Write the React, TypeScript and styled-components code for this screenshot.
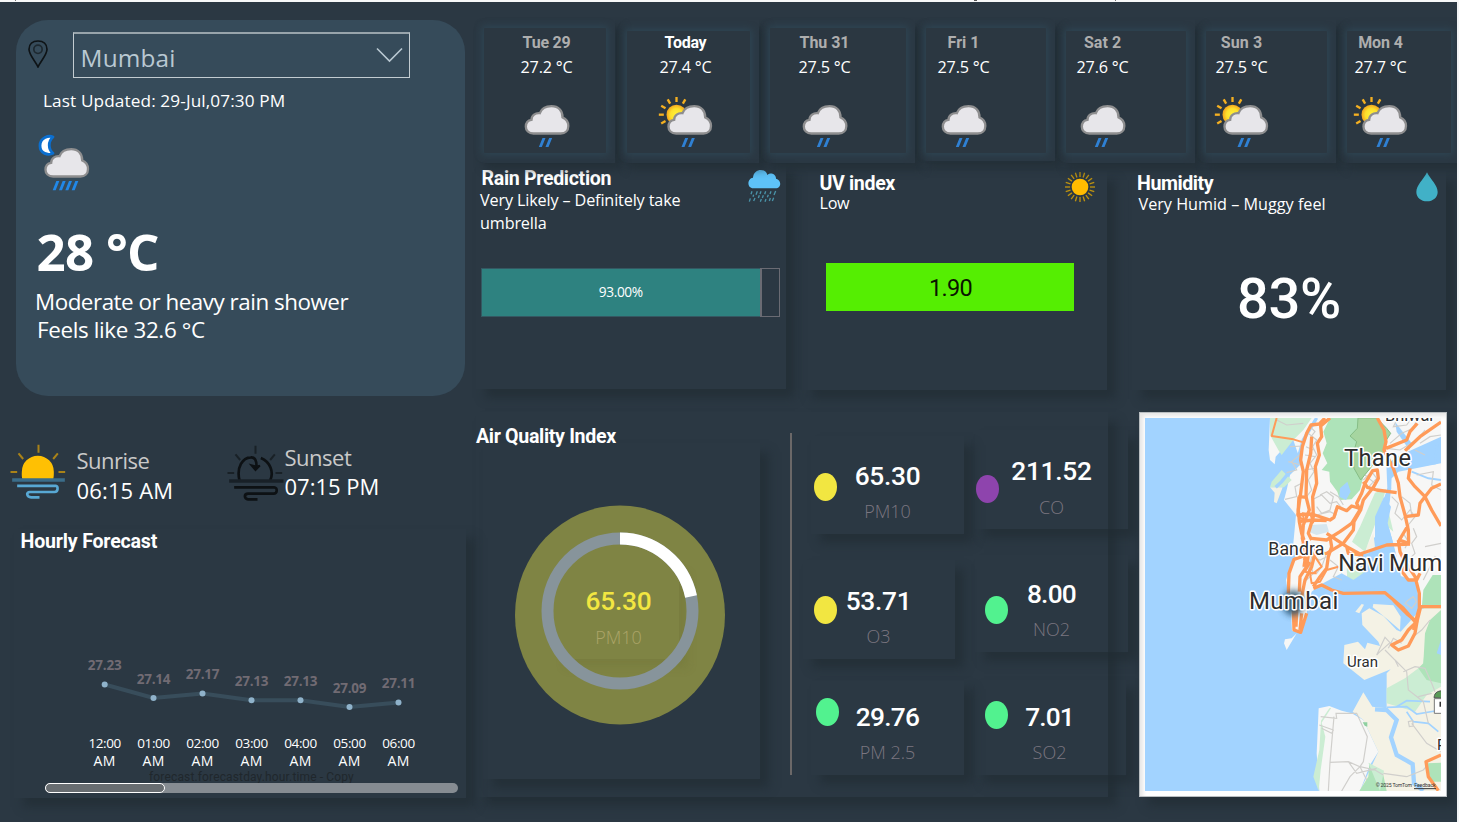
import React from 'react';
import styled, { createGlobalStyle } from 'styled-components';

const GlobalStyle = createGlobalStyle`
  * { box-sizing: border-box; }
  body { margin: 0; background: #f2f4f6; }
`;

const SANS = '"Open Sans", "Noto Sans", sans-serif';
const DIN = 'Roboto, "Liberation Sans", sans-serif';
const SHADOW = '9px 9px 9px rgba(32, 43, 50, 0.62)';

const Page = styled.div`
  width: 1459px;
  height: 822px;
  overflow: hidden;
  display: flex;
  flex-direction: column;
  background: #f2f4f6;
  font-family: ${SANS};
  color: #fff;
`;

const TopStrip = styled.div`
  height: 2px;
  flex: none;
  background:
    linear-gradient(#777, #777) 15px 0 / 1px 1px no-repeat,
    linear-gradient(#555, #555) 974px 0 / 3px 1px no-repeat,
    linear-gradient(#777, #777) 1115px 0 / 1px 1px no-repeat,
    #f7f8f9;
`;

const Board = styled.main`
  display: flex;
  width: 1457px;
  height: 820px;
  overflow: hidden;
  background: #2b3843;
`;

const LeftColumn = styled.section`
  width: 476px;
  flex: none;
`;

const RightColumn = styled.section`
  width: 981px;
  flex: none;
`;

interface LabelProps {
  $size: number;
  $line: number;
  $weight?: number;
  $track?: number;
  $color?: string;
  $din?: boolean;
  $top?: number;
  $left?: number;
}

const Label = styled.div<LabelProps>`
  font-family: ${(p) => (p.$din ? DIN : SANS)};
  font-size: ${(p) => p.$size}px;
  line-height: ${(p) => p.$line}px;
  font-weight: ${(p) => p.$weight ?? 400};
  letter-spacing: ${(p) => p.$track ?? 0}px;
  color: ${(p) => p.$color ?? '#fff'};
  margin-top: ${(p) => p.$top ?? 0}px;
  margin-left: ${(p) => p.$left ?? 0}px;
  white-space: nowrap;
`;

const PanelTitle = styled(Label).attrs({ $size: 19.6, $weight: 700, $din: true })``;

/* ---------- current weather ---------- */

const CityCard = styled.div`
  width: 449px;
  height: 376px;
  margin: 17.5px 0 0 16px;
  padding-top: 12px;
  border-radius: 32px;
  background: #364b5a;
`;

const CityRow = styled.div`
  display: flex;
  padding-left: 12px;
  height: 47px;
`;

const PinIcon = styled.svg`
  width: 20px;
  height: 28px;
  margin: 8.5px 25px 0 0;
`;

const CitySelect = styled.div`
  width: 336.5px;
  height: 46px;
  border: 1px solid #c3ccd1;
  border-top: 2px solid #98a4ab;
  display: flex;
  justify-content: space-between;
  padding: 5px 6px 0 6px;
`;

const Chevron = styled.svg`
  width: 27px;
  height: 16px;
  margin-top: 8px;
`;

const CurrentIcon = styled.svg`
  display: block;
  width: 60px;
  height: 60px;
  margin: 22px 0 0 17px;
`;

/* ---------- sun times ---------- */

const SunTimes = styled.div`
  display: flex;
  height: 133.5px;
  padding: 47.5px 0 0 9.5px;
`;

const SunIcon = styled.svg<{ $shift: number }>`
  width: 58px;
  height: 60px;
  margin-right: ${(p) => p.$shift}px;
  flex: none;
`;

const SunText = styled.div<{ $width: number; $raise: number }>`
  width: ${(p) => p.$width}px;
  margin-top: ${(p) => p.$raise}px;
`;

/* ---------- hourly ---------- */

const HourlyPanel = styled.div`
  width: 452px;
  height: 269px;
  margin-left: 14px;
  padding-top: 3px;
  box-shadow: ${SHADOW};
`;

const HourlyChart = styled.svg`
  display: block;
  width: 452px;
  height: 231px;
`;

const ScrollTrack = styled.div`
  width: 412.5px;
  height: 9.5px;
  margin: 0 0 0 31px;
  border-radius: 5px;
  background: #868c92;
  position: relative;
`;

const ScrollThumb = styled.div`
  width: 120px;
  height: 9.5px;
  border: 1px solid #fff;
  border-left-width: 1.5px;
  border-radius: 5px;
  background: #686d71;
`;

/* ---------- daily ---------- */

const DailyStrip = styled.div`
  display: flex;
  height: 161px;
  padding-top: 18px;
  position: relative;
`;

const DayTile = styled.article<{ $width: number; $height: number; $gap: number }>`
  width: ${(p) => p.$width}px;
  height: ${(p) => p.$height}px;
  margin-right: ${(p) => p.$gap}px;
  padding: 8px 9px 9px 8px;
  flex: none;
  border-radius: 8px 0 0 8px;
  box-shadow: 7px 7px 8px rgba(32, 43, 50, 0.6);
`;

const DayInner = styled.div<{ $drop: number }>`
  height: ${(p) => 125 - p.$drop}px;
  margin-top: ${(p) => p.$drop}px;
  background: #2b3741;
  border-radius: 1px;
  box-shadow: 0 0 7px 2px #2e4553;
`;

const DayContent = styled.div<{ $shift: number; $drop: number }>`
  width: 100px;
  margin-left: ${(p) => p.$shift}px;
  padding-top: ${(p) => 6 - p.$drop}px;
  display: flex;
  flex-direction: column;
  align-items: center;
`;

const DayIcon = styled.svg`
  width: 64px;
  height: 64px;
  margin-top: 13px;
  flex: none;
`;

/* ---------- metrics ---------- */

const MetricRow = styled.div`
  display: flex;
  align-items: flex-start;
  height: 249px;
`;

const MetricCard = styled.article<{ $width: number; $height: number; $top: number; $gap: number }>`
  width: ${(p) => p.$width}px;
  height: ${(p) => p.$height}px;
  margin: ${(p) => p.$top}px ${(p) => p.$gap}px 0 0;
  flex: none;
  box-shadow: ${SHADOW};
`;

const MetricHead = styled.header<{ $height: number; $right: number }>`
  display: flex;
  justify-content: space-between;
  align-items: flex-start;
  height: ${(p) => p.$height}px;
  padding-right: ${(p) => p.$right}px;
`;

const MetricIcon = styled.svg<{ $w: number; $h: number; $top: number }>`
  width: ${(p) => p.$w}px;
  height: ${(p) => p.$h}px;
  margin-top: ${(p) => p.$top}px;
`;

const RainBar = styled.div`
  display: flex;
  width: 299px;
  height: 49px;
  margin-left: 5px;
  border: 1px solid #345862;
  border-right: 0;
`;

const RainFill = styled.div`
  width: 277.5px;
  background: #2e8280;
  display: flex;
  align-items: center;
  justify-content: center;
`;

const RainRest = styled.div`
  flex: 1;
  margin: -1px 0;
  border: 1px solid #6a6b73;
  border-left-width: 2px;
`;

const UvBar = styled.div`
  width: 248px;
  height: 48px;
  margin-left: 24px;
  background: #55ee02;
  display: flex;
  align-items: center;
  justify-content: center;
`;

const HumidityValue = styled.div`
  display: flex;
  justify-content: center;
`;

/* ---------- air quality ---------- */

const BottomRow = styled.div`
  display: flex;
  align-items: flex-start;
`;

const AirPanel = styled.article`
  display: flex;
  width: 632px;
  height: 385px;
  margin-right: 30.5px;
  flex: none;
  box-shadow: ${SHADOW};
`;

const GaugeColumn = styled.div`
  width: 314px;
  flex: none;
`;

const GaugeTile = styled.div`
  width: 277px;
  height: 336px;
  margin-left: 7px;
  margin-top: -2px;
  box-shadow: ${SHADOW};
`;

const Divider = styled.div`
  width: 2px;
  height: 342px;
  margin-top: 21px;
  flex: none;
  background: #6b6868;
`;

const PollutantColumn = styled.div<{ $width: number }>`
  width: ${(p) => p.$width}px;
  flex: none;
`;

const PollutantTile = styled.div<{ $left: number; $top: number; $width: number; $height: number }>`
  display: flex;
  align-items: flex-start;
  width: ${(p) => p.$width}px;
  height: ${(p) => p.$height}px;
  margin: ${(p) => p.$top}px 0 0 ${(p) => p.$left}px;
  box-shadow: ${SHADOW};
`;

const Dot = styled.span<{ $color: string; $left: number; $top: number }>`
  width: 23px;
  height: 28px;
  margin: ${(p) => p.$top}px 0 0 ${(p) => p.$left}px;
  border-radius: 50%;
  flex: none;
  background: ${(p) => p.$color};
`;

const Reading = styled.div<{ $left: number; $top: number }>`
  width: 84px;
  margin: ${(p) => p.$top}px 0 0 ${(p) => p.$left}px;
  flex: none;
  text-align: center;
`;

/* ---------- map ---------- */

const MapFrame = styled.div`
  width: 308px;
  height: 385px;
  padding: 5px 5.5px 6px;
  border: 1px solid #b9bec1;
  background: #fff;
  box-shadow: ${SHADOW}, inset 3px 3px 4px rgba(0, 0, 0, 0.1);
`;

const MapView = styled.svg`
  display: block;
  width: 296px;
  height: 373px;
`;

/* ---------- icons ---------- */

const CLOUD =
  'M190 400.500C174 401 166 391 166 380C166 369 173 361 183 359.500C183 346 195 338 208 339.500C213 326 226 318.500 243 318.500C264 318.500 276.500 332 276 352C288 357 293.500 366 293.500 378C293.500 392 284 400.500 271 400.500Z';

const SunGradient = () => (
  <radialGradient id="sunDisc">
    <stop offset="0" stopColor="#fff23a" />
    <stop offset="0.6" stopColor="#fde02c" />
    <stop offset="1" stopColor="#f3a51d" />
  </radialGradient>
);

const WeatherGlyph = ({ sunny }: { sunny: boolean }) => (
  <DayIcon viewBox="133.5 270 192 192">
    <defs>
      <SunGradient />
    </defs>
    {sunny && (
      <g>
        <circle cx="201" cy="344" r="30" fill="url(#sunDisc)" />
        {[-120, -90, -60, -30, 0, 30].map((a) => (
          <path key={a} d="M201 291v15" stroke="#f5b021" strokeWidth="7" transform={`rotate(${a} 201 344)`} />
        ))}
      </g>
    )}
    <g transform={sunny ? 'translate(11 0)' : undefined}>
      <path d={CLOUD} fill="#e7e6ea" stroke="#8e8e8f" strokeWidth="7" />
      <path d="M216 414h9l-11 27h-9zM236 414h9l-11 27h-9z" fill="#2f80d3" />
    </g>
  </DayIcon>
);

const NightShower = () => (
  <CurrentIcon viewBox="99 399 180 180">
    <path
      d="M159 411C147 405 120 412 120 437C120 461 144 467 159 460C144 448 144 424 159 411Z"
      fill="#fff"
      stroke="#0b6fd0"
      strokeWidth="8.500"
      strokeLinejoin="round"
    />
    <path d={CLOUD} transform="translate(-29.500 129)" fill="#e7e6ea" stroke="#8e8e8f" strokeWidth="7" />
    <path d="M169 543h9l-11 28h-9zM188 543h9l-11 28h-9zM207 543h9l-11 28h-9zM226 543h9l-11 28h-9z" fill="#2188e8" />
  </CurrentIcon>
);

const SunRays = ({ color }: { color: string }) => (
  <g stroke={color} strokeWidth="6" fill="none" opacity="0.85">
    <path d="M114 134v24M54 160l14 17M172 160l-14 17M30 216h20M174 216h20" />
  </g>
);

const SunriseIcon = () => (
  <SunIcon $shift={9} viewBox="28.5 129 174 180">
    <SunRays color="#c08f10" />
    <path d="M66 238C63 228 64 217 64 215A48 48 0 0 1 160 215C160 224 160 230 158 238Z" fill="#ffc003" />
    <path d="M35 240H193" stroke="#3b6d8a" strokeWidth="11" />
    <path
      d="M50 257.500H166C173 257 174 276 162 276H88C76 276 78 291 92 292H117"
      fill="none"
      stroke="#58a8d4"
      strokeWidth="8"
    />
  </SunIcon>
);

const SunsetIcon = () => (
  <SunIcon $shift={-0.5} viewBox="28.5 129 174 180">
    <g transform="translate(0 3)">
      <SunRays color="#161d22" />
      <path d="M66 238C56 198 76 170 100 169C112 168 118 178 117 200M130 171C158 182 170 214 158 238" fill="none" stroke="#0d1114" strokeWidth="8" />
      <path d="M102 193L114 207L127 194L117 197Z" fill="#0d1114" stroke="#0d1114" strokeWidth="6" />
      <path d="M35 240H198" stroke="#182027" strokeWidth="11" />
      <path
        d="M50 259H170C180 259 181 278 168 278H92C78 279 80 293 92 295H120"
        fill="none"
        stroke="#0d1114"
        strokeWidth="8"
      />
    </g>
  </SunIcon>
);

/* ---------- data ---------- */

interface Day {
  name: string;
  temp: string;
  sunny: boolean;
  width: number;
  height: number;
  gap: number;
  shift: number;
  drop: number;
  track: number;
}

const days: Day[] = [
  { name: 'Tue 29', temp: '27.2 °C', sunny: false, width: 139, height: 143, gap: 4, shift: 12.5, drop: 0, track: -0.25 },
  { name: 'Today', temp: '27.4 °C', sunny: true, width: 140, height: 143, gap: 3, shift: 8.5, drop: 3, track: -0.25 },
  { name: 'Thu 31', temp: '27.5 °C', sunny: false, width: 153, height: 143, gap: 3, shift: 4.5, drop: 0, track: -0.05 },
  { name: 'Fri 1', temp: '27.5 °C', sunny: false, width: 137, height: 141, gap: 3, shift: -12.5, drop: 0, track: 0 },
  { name: 'Sat 2', temp: '27.6 °C', sunny: false, width: 137, height: 143, gap: 3, shift: -13.5, drop: 3, track: 0.05 },
  { name: 'Sun 3', temp: '27.5 °C', sunny: true, width: 138, height: 143, gap: 3, shift: -14.5, drop: 3, track: 0.15 },
  { name: 'Mon 4', temp: '27.7 °C', sunny: true, width: 121, height: 143, gap: 0, shift: -16.5, drop: 3, track: -0.1 },
];

const hours = [
  { x: 90.7, y: 132.5, value: '27.23', time: '12:00' },
  { x: 139.5, y: 146, value: '27.14', time: '01:00' },
  { x: 188.5, y: 141.5, value: '27.17', time: '02:00' },
  { x: 237.5, y: 148.2, value: '27.13', time: '03:00' },
  { x: 286.5, y: 148.2, value: '27.13', time: '04:00' },
  { x: 335.5, y: 155, value: '27.09', time: '05:00' },
  { x: 384.5, y: 150.5, value: '27.11', time: '06:00' },
];

const YELLOW = '#f2e641';
const GREEN = '#52f28f';

interface Pollutant {
  name: string;
  value: string;
  color: string;
  left: number;
  top: number;
  width: number;
  height: number;
  dot: [number, number];
  text: [number, number];
  track: number;
}

const leftPollutants: Pollutant[] = [
  { name: 'PM10', value: '65.30', color: YELLOW, left: 19, top: 24, width: 153, height: 98, dot: [3, 37], text: [8.5, 27.5], track: -0.3 },
  { name: 'O3', value: '53.71', color: YELLOW, left: 11, top: 26, width: 152, height: 99, dot: [11, 36], text: [-0.5, 28.5], track: -0.3 },
  { name: 'PM 2.5', value: '29.76', color: GREEN, left: 19, top: 21, width: 153, height: 95, dot: [5, 18], text: [6.5, 24.5], track: -0.7 },
];

const rightPollutants: Pollutant[] = [
  { name: 'CO', value: '211.52', color: '#8e44ad', left: 0, top: 18, width: 153, height: 99, dot: [1, 45], text: [10.5, 29], track: -0.25 },
  { name: 'NO2', value: '8.00', color: GREEN, left: 0, top: 26, width: 153, height: 97, dot: [10, 41], text: [1.5, 26.5], track: -0.75 },
  { name: 'SO2', value: '7.01', color: GREEN, left: 0, top: 28, width: 151, height: 95, dot: [10, 21], text: [-0.5, 24.5], track: -0.9 },
];

const Pollutants = ({ items, width }: { items: Pollutant[]; width: number }) => (
  <PollutantColumn $width={width}>
    {items.map((p) => (
      <PollutantTile key={p.name} $left={p.left} $top={p.top} $width={p.width} $height={p.height}>
        <Dot $color={p.color} $left={p.dot[0]} $top={p.dot[1]} />
        <Reading $left={p.text[0]} $top={p.text[1]}>
          <Label $size={26.3} $line={24} $weight={500} $din $track={p.track}>
            {p.value}
          </Label>
          <Label $size={18} $line={20} $weight={300} $top={13.5} $color="#7b7680">
            {p.name}
          </Label>
        </Reading>
      </PollutantTile>
    ))}
  </PollutantColumn>
);

const Gauge = () => {
  const r = 72.5;
  const angle = (78.4 * Math.PI) / 180;
  const x = 137 + r * Math.sin(angle);
  const y = 168 - r * Math.cos(angle);
  return (
    <svg width="277" height="336" viewBox="0 0 277 336">
      <defs>
        <filter id="soft" x="-20%" y="-20%" width="140%" height="140%">
          <feGaussianBlur stdDeviation="4" />
        </filter>
        <clipPath id="outsideCard">
          <path clipRule="evenodd" d="M0 0H277V336H0ZM72 120V216H196V120Z" />
        </clipPath>
      </defs>
      <ellipse cx="137" cy="172" rx="105" ry="109.500" fill="#7f8444" />
      <g clipPath="url(#outsideCard)">
        <rect x="82" y="130" width="123" height="95" fill="#6f7338" opacity="0.35" filter="url(#soft)" />
      </g>
      <circle cx="137" cy="168" r={r} fill="none" stroke="#87949b" strokeWidth="12" />
      <path d={`M137 ${168 - r}A${r} ${r} 0 0 1 ${x} ${y}`} fill="none" stroke="#fff" strokeWidth="12" />
      <text x="135.500" y="167" textAnchor="middle" fontFamily={DIN} fontSize="26.300" fontWeight="500" letterSpacing="-0.250" fill="#f2e641">
        65.30
      </text>
      <text x="135.500" y="200.500" textAnchor="middle" fontFamily={SANS} fontSize="18" fontWeight="300" fill="#aca468">
        PM10
      </text>
    </svg>
  );
};

const CityMap = () => (
  <MapView viewBox="45 54 888 1119" preserveAspectRatio="none">
    <defs>
      <filter id="pinBlur" x="-50%" y="-50%" width="200%" height="200%">
        <feGaussianBlur stdDeviation="10" />
      </filter>
    </defs>
    <rect x="45" y="54" width="888" height="1119" fill="#a2d3ff" />
    {/* land */}
    <g fill="#f7f7f6">
      <path d="M420 54L416 150L420 180L434 193L437 170L460 145L490 120L500 150L515 190L480 225L470 270L462 300L498 345L490 430L497 478L478 510L468 540L484 650L486 692L512 700L528 660L534 610L545 575L575 552L610 556L648 560L655 500L700 455L735 410L735 350L760 300L775 260L775 190L800 170L933 110V54Z" />
      <path d="M785 235L805 215L933 190V620L870 625L858 545L815 540L800 470L790 430L770 360L780 300Z" />
      <path d="M566 925L598 918L635 932L665 940L700 960L745 1055L720 1095L690 1173H568L560 1060Z" />
      <path d="M500 700L470 750L462 730L465 718L485 715Z" />
    </g>
    {/* fields and rock */}
    <g fill="#f4f2e5">
      <path d="M695 640L718 625L760 648L800 690L812 695L870 630L933 600V1173H690L745 1055L700 960L668 935L700 877L727 920L770 925V820L782 808L703 840L640 790L643 735L684 725L705 748L712 728L750 738L745 725L697 675Z" />
      <path d="M730 612L790 616L812 650L810 690L775 660L728 622Z" />
      <path d="M676 635L695 612L702 614L688 640Z" />
      <path d="M420 262L458 262L440 310L432 306L434 278Z" />
      <path d="M672 465L700 460L730 400L735 440L715 460Z" />
    </g>
    {/* woods */}
    <path d="M420 54H545L520 90L490 120L455 165L445 150L420 105Z" fill="#cbedd3" />
    <path d="M425 245L455 210L485 240L462 262H420Z" fill="#cbedd3" />
    <path d="M600 54H745L765 150L700 230L690 270L665 298L630 300L622 275L600 245L598 215L575 210L592 190L578 160L590 130L580 95Z" fill="#aee3b9" />
    <path d="M684 54H740L770 85L782 100L768 122L765 150L692 240L672 205L668 165L680 125L660 108L682 85Z" fill="#a6d5a0" stroke="#86bd86" strokeWidth="3" />
    <path d="M735 278L768 268L740 360L705 455L666 425L690 380Z" fill="#cbedd3" />
    <path d="M770 310L790 395L773 380Z" fill="#cbedd3" />
    <path d="M650 495L680 500L705 515L652 553Z" fill="#cbedd3" />
    <path d="M573 962L598 925L604 923L575 968L586 1010L572 1110L566 1173L550 1130L568 1050Z" fill="#cbedd3" />
    <path d="M880 570L908 525L933 525V625H875Z" fill="#aee3b9" />
    <path d="M933 690L890 720L878 795L825 835L770 865L770 910L855 935L890 885L933 860Z" fill="#cbedd3" />
    <path d="M900 660L933 630V850L890 840L865 805L880 790L885 700Z" fill="#aee3b9" />
    <path d="M718 1090L760 1125L770 1173H688L715 1130Z" fill="#aee3b9" />
    <path d="M715 1088L762 1112L750 1173Z" fill="#cbedd3" />
    <path d="M890 1090L933 1088V1145H902Z" fill="#aee3b9" />
    <path d="M698 967H712V980L704 977Z" fill="#8fd0a0" />
    {/* creeks and lakes */}
    <g fill="#a2d3ff">
      <path d="M652 245L662 275L648 300L628 290L630 265Z" />
      <path d="M735 350L762 290L783 320L773 370L788 425L735 440Z" />
      <path d="M635 520L575 552L640 568L760 566L830 620L860 550L830 535L760 507L680 545Z" />
      <path d="M795 65L845 130L838 150L800 95Z" />
      <path d="M540 375L590 372L597 395L560 405L535 395Z" fill="#d6e6ee" />
      <path d="M933 720L920 760L933 765Z" />
    </g>
    <g fill="none" stroke="#a2d3ff">
      <path d="M560 54L520 120L500 190L455 245L437 262" strokeWidth="10" />
      <path d="M845 180L875 195L915 190L920 140L933 118M845 215L895 235L933 240" strokeWidth="6" />
      <path d="M735 928L770 930L800 960L783 1012L800 1065L848 1092L852 1150L880 1172" strokeWidth="13" />
      <path d="M770 922L830 920L860 942L933 930M830 935L850 965L895 970L925 995M800 920L830 902L900 905" strokeWidth="5" />
      <path d="M775 190L778 265L768 305" strokeWidth="12" />
    </g>
    {/* minor roads */}
    <g fill="none" stroke="#d0cfcc" strokeWidth="3.500">
      <path d="M480 140L520 138L515 160L485 185L500 210L470 218M475 185L512 195M440 60L470 75L520 70M465 298L500 290L495 260L515 250M535 100L560 120L548 140L560 165L540 190L552 215L535 240L545 270L530 290M540 80L555 95L543 110M528 140L550 150M525 165L556 170M522 210L556 205M545 300L575 285L600 310L620 305L640 330M570 285L590 275L610 290L600 330L575 340L560 320M600 275L625 290L640 315M560 345L600 335L620 345" />
      <path d="M515 430L530 470L520 500L540 490L550 520L530 540L545 470L570 480L590 470M560 440L590 460L575 500L560 520M600 480L625 500L610 530L635 540" />
      <path d="M700 240L725 215L740 235L715 262M705 225L735 250M780 130L815 100L850 85L860 60M770 145L810 150L860 120L885 90M800 60L790 80L830 75L845 54M870 130L900 110L933 105M855 150L885 165" />
      <path d="M860 225L910 215L905 255L933 270M880 290L905 270M785 290L805 310L795 340L815 360L840 330L855 350L835 375M815 290L840 310L845 345M850 385L860 410L845 430L855 460L835 480L850 500M885 440L933 430M880 540L915 470L933 480M820 400L835 425L825 445" />
      <path d="M835 600L850 590L860 605L845 625L825 610Z" />
      <path d="M740 765L765 712L780 728L750 755ZM765 750L795 780L805 800M775 745L790 715L815 730M795 780L830 815L835 870L880 905L895 970M850 710L875 690L900 660M820 815L855 800L885 805L905 850L915 875M865 890L905 880M845 970L890 1030L933 1055M835 965L848 962L850 978L838 980ZM830 1130L880 1110L893 1095M760 1120L830 1130" />
      <path d="M572 950L620 955L618 940L680 940L712 1010L700 1085L690 1100L655 1085L600 1087L595 1173M568 975L610 990L605 1000L575 985M612 950L600 1087M690 1100L660 1130L635 1173M690 1100L735 1110L760 1125M655 1085L680 1120L740 1105M690 1100L710 1140" />
    </g>
    {/* major roads */}
    <g fill="none" stroke="#ff9b59" strokeWidth="10" strokeLinejoin="round">
      <path d="M440 54L425 108L490 118L520 127" strokeWidth="6" />
      <path d="M585 54L568 72L543 75L530 100L517 140L512 180L520 215L512 280L505 330L508 365L515 400L522 420" />
      <path d="M600 54L572 78L575 110L562 130L568 165L556 200L560 250L548 290L550 350L535 400L545 420" />
      <path d="M545 110L542 160L530 210L528 290L538 330L520 375L517 415L528 460L522 500" />
      <path d="M505 290L532 292M500 345L545 342L600 360L612 352L622 320L650 332L665 318L690 325M505 365L550 360L590 362" />
      <path d="M505 290L502 345L522 362L518 340L542 345L550 370" strokeWidth="6" />
      <path d="M545 415L590 420L630 395L665 370L690 330L680 310L695 280L705 250L728 212L742 210L745 235L730 262L700 300L692 330L672 365L670 390L640 430L590 460L530 465L492 478L477 520L475 580" />
      <path d="M700 245L712 262L740 270L800 278M742 54L762 90L768 125L762 150L790 205L805 250L810 290L825 345L835 390L836 430L808 420L835 375M768 145L830 120L840 95L862 70M825 152L870 110L933 66" />
      <path d="M840 205L835 235L855 260L885 290L870 310L865 345L825 350M885 290L905 265L933 252M885 290L905 330L933 378" />
      <path d="M590 400L650 440L690 462L770 435L840 432M650 440L655 460L700 465M805 420L810 455L822 480L820 520L835 540L860 540L870 520M822 480L855 530L868 580L868 625L855 670L835 690L815 720L785 735L805 750L835 738L855 700L862 660L872 620L933 620" />
      <path d="M600 410L605 440L595 470L590 505L570 530L550 560M535 465L530 500L510 530L508 575M560 440L545 500L525 540L515 590M550 565L575 555L605 570L640 580L765 578L820 625L855 665M790 600L835 645L860 665L850 690" />
      <path d="M555 470L575 500L550 520L525 515L540 490L520 475M625 500L590 510L570 545L545 550L540 520L560 520" strokeWidth="6" />
      <path d="M490 625L492 690L512 697L530 640M500 630L498 680M515 640L510 690" strokeWidth="10" />
      <path d="M933 1065L888 1085L895 1130L925 1172" />
    </g>
    {/* selected place */}
    <ellipse cx="490" cy="609" rx="34" ry="38" fill="#26516d" opacity="0.85" filter="url(#pinBlur)" />
    {/* places */}
    <g fontFamily={DIN} fill="#2d2d2d" stroke="#fff" strokeWidth="9" strokeLinejoin="round" paintOrder="stroke">
      <text x="765" y="64" fontSize="49">Bhiwar</text>
      <text x="642" y="197" fontSize="71" textLength="201">Thane</text>
      <text x="415" y="465" fontSize="53" textLength="168">Bandra</text>
      <text x="625" y="512" fontSize="70" textLength="312">Navi Mum</text>
      <text x="357" y="626" fontSize="72" textLength="268">Mumbai</text>
      <text x="651" y="801" fontSize="45" textLength="93">Uran</text>
      <text x="921" y="1051" fontSize="45">P</text>
    </g>
    <path d="M912 893C914 875 925 872 945 872V895Z" fill="#5a9a57" stroke="#555" strokeWidth="3" />
    <path d="M913 896H945V940H913Z" fill="#fff" stroke="#777" strokeWidth="3" />
    <path d="M931 905V920" stroke="#333" strokeWidth="5" />
    <g fontFamily={DIN} fill="#333" fontSize="15.500">
      <text x="737" y="1160" textLength="109">© 2025 TomTom</text>
      <text x="853" y="1160" textLength="64">Feedback</text>
    </g>
    <path d="M852 1166H918" stroke="#333" strokeWidth="3" />
  </MapView>
);

export default function App() {
  return (
    <Page>
      <GlobalStyle />
      <TopStrip />
      <Board>
        <LeftColumn>
          <CityCard>
            <CityRow>
              <PinIcon viewBox="84 121 60 84">
                <path d="M114 202C106 184 87 166 87 149C87 133 98 124 114 124C130 124 141 133 141 149C141 166 122 184 114 202Z" fill="none" stroke="#0e1316" strokeWidth="5" />
                <circle cx="114" cy="149" r="12.500" fill="none" stroke="#1d282f" strokeWidth="5" />
              </PinIcon>
              <CitySelect>
                <Label $size={24.4} $line={38} $track={0.15} $left={0.6} $color="#b9c8d2">
                  Mumbai
                </Label>
                <Chevron viewBox="0 0 27 16">
                  <path d="M1 1.500L13.500 14L26 1.500" fill="none" stroke="#b9c8d2" strokeWidth="1.600" />
                </Chevron>
              </CitySelect>
            </CityRow>
            <Label $size={17.2} $line={20} $track={0.12} $top={12.5} $left={27}>
              Last Updated: 29-Jul,07:30 PM
            </Label>
            <NightShower />
            <Label $size={51} $line={50} $weight={700} $track={-0.7} $top={33} $left={20.5}>
              28 °C
            </Label>
            <Label $size={22.4} $line={28} $track={-0.48} $top={12} $left={19}>
              Moderate or heavy rain shower
            </Label>
            <Label $size={22.4} $line={28} $track={-0.35} $left={21}>
              Feels like 32.6 °C
            </Label>
          </CityCard>

          <SunTimes>
            <SunriseIcon />
            <SunText $width={150.5} $raise={2.5}>
              <Label $size={22} $line={29.5} $track={-0.5} $color="#c9c9c9">
                Sunrise
              </Label>
              <Label $size={22} $line={30} $track={0.15}>
                06:15 AM
              </Label>
            </SunText>
            <SunsetIcon />
            <SunText $width={110} $raise={0}>
              <Label $size={22} $line={29} $track={-0.48} $color="#c9c9c9">
                Sunset
              </Label>
              <Label $size={22} $line={29}>
                07:15 PM
              </Label>
            </SunText>
          </SunTimes>

          <HourlyPanel>
            <PanelTitle $line={20} $track={-0.2} $left={6.6}>
              Hourly Forecast
            </PanelTitle>
            <HourlyChart viewBox="0 0 452 231">
              <text x="237.500" y="228.500" textAnchor="middle" fontFamily={DIN} fontSize="12" letterSpacing="0.140" fill="#20272c">
                forecast.forecastday.hour.time - Copy
              </text>
              <polyline points={hours.map((h) => `${h.x},${h.y}`).join(' ')} fill="none" stroke="#384d5b" strokeWidth="4" />
              {hours.map((h) => (
                <g key={h.time} textAnchor="middle" fontFamily={SANS}>
                  <circle cx={h.x} cy={h.y} r="3" fill="#8fb2ca" />
                  <text x={h.x} y={h.y - 14.5} fontSize="13.500" fontWeight="700" letterSpacing="-0.200" fill="#716b73">
                    {h.value}
                  </text>
                  <text x={h.x} y="196" fontSize="13.500" letterSpacing="-0.400" fill="#fff">
                    {h.time}
                  </text>
                  <text x={h.x} y="214" fontSize="14" letterSpacing="0.400" fill="#fff">
                    AM
                  </text>
                </g>
              ))}
            </HourlyChart>
            <ScrollTrack>
              <ScrollThumb />
            </ScrollTrack>
          </HourlyPanel>
        </LeftColumn>

        <RightColumn>
          <DailyStrip>
            {days.map((d) => (
              <DayTile key={d.name} $width={d.width} $height={d.height} $gap={d.gap}>
                <DayInner $drop={d.drop}>
                  <DayContent $shift={d.shift} $drop={d.drop}>
                    <Label $size={16} $line={18} $weight={700} $din $track={d.track} $color={d.name === 'Today' ? '#fff' : '#aeaeae'}>
                      {d.name}
                    </Label>
                    <Label $size={16.2} $line={20} $track={-0.2} $top={5}>
                      {d.temp}
                    </Label>
                    <WeatherGlyph sunny={d.sunny} />
                  </DayContent>
                </DayInner>
              </DayTile>
            ))}
          </DailyStrip>

          <MetricRow>
            <MetricCard $width={310} $height={226} $top={0} $gap={16}>
              <MetricHead $height={105} $right={4}>
                <div>
                  <PanelTitle $line={20} $track={-0.33} $top={6} $left={5.5}>
                    Rain Prediction
                  </PanelTitle>
                  <Label $size={16.2} $line={22.5} $track={-0.14} $top={0} $left={4}>
                    Very Likely – Definitely take
                    <br />
                    umbrella
                  </Label>
                </div>
                <MetricIcon $w={34} $h={34} $top={6} viewBox="834 507 102 102">
                  <path d="M850 565C829 565 832 534 849 533C851 504 888 503 892 525C904 514 919 524 918 536C936 540 934 565 917 565Z" fill="#5ec2f8" />
                  <path
                    d="M846 574l-3 9M862 574l-4 10M873 574l-3 8M887 574l-3 9M903 574l-3 8M917 573l-5 12M851 584l-2 6M841 595l-3 10M855 594l-4 9M868 586l-3 8M880 586l-3 8M895 584l-3 8M874 597l-3 8M888 597l-3 8M901 594l-3 9M911 593l-4 10"
                    stroke="#4a93a8"
                    strokeWidth="4"
                  />
                </MetricIcon>
              </MetricHead>
              <RainBar>
                <RainFill>
                  <Label $size={13.7} $line={20} $track={-0.38} $top={-1}>
                    93.00%
                  </Label>
                </RainFill>
                <RainRest />
              </RainBar>
            </MetricCard>

            <MetricCard $width={305} $height={219} $top={8} $gap={25}>
              <MetricHead $height={92} $right={11}>
                <div>
                  <PanelTitle $line={20} $track={-0.36} $top={3} $left={17.5}>
                    UV index
                  </PanelTitle>
                  <Label $size={16.2} $line={20} $track={-0.3} $top={-1} $left={17.5}>
                    Low
                  </Label>
                </div>
                <MetricIcon $w={32} $h={32} $top={0} viewBox="312 512 96 96">
                  <circle cx="360" cy="560" r="25" fill="#ffbb00" />
                  {Array.from({ length: 20 }, (_, i) => (
                    <path key={i} d="M360 515v15" stroke="#bd9210" strokeWidth="4" transform={`rotate(${i * 18} 360 560)`} />
                  ))}
                </MetricIcon>
              </MetricHead>
              <UvBar>
                <Label $size={23.5} $line={28} $din $track={-0.7} $top={1.5} $left={1} $color="#0a1400">
                  1.90
                </Label>
              </UvBar>
            </MetricCard>

            <MetricCard $width={314} $height={219} $top={8} $gap={0}>
              <MetricHead $height={99} $right={8.5}>
                <div>
                  <PanelTitle $line={20} $track={-0.45} $top={3} $left={5}>
                    Humidity
                  </PanelTitle>
                  <Label $size={16.2} $line={20} $top={0} $left={6.5}>
                    Very Humid – Muggy feel
                  </Label>
                </div>
                <MetricIcon $w={22} $h={30} $top={0.5} viewBox="1367 515 66 90">
                  <path d="M1400 516C1411 538 1432 555 1432 575C1432 592 1418 603 1400 603C1382 603 1368 592 1368 575C1368 555 1389 538 1400 516Z" fill="#41b1c7" />
                </MetricIcon>
              </MetricHead>
              <HumidityValue>
                <Label $size={56} $line={58} $weight={500} $din $track={-0.3}>
                  83%
                </Label>
              </HumidityValue>
            </MetricCard>
          </MetricRow>

          <BottomRow>
            <AirPanel>
              <GaugeColumn>
                <PanelTitle $line={16} $track={-0.33} $top={17}>
                  Air Quality Index
                </PanelTitle>
                <GaugeTile>
                  <Gauge />
                </GaugeTile>
              </GaugeColumn>
              <Divider />
              <Pollutants items={leftPollutants} width={183} />
              <Pollutants items={rightPollutants} width={153} />
            </AirPanel>
            <MapFrame>
              <CityMap />
            </MapFrame>
          </BottomRow>
        </RightColumn>
      </Board>
    </Page>
  );
}
